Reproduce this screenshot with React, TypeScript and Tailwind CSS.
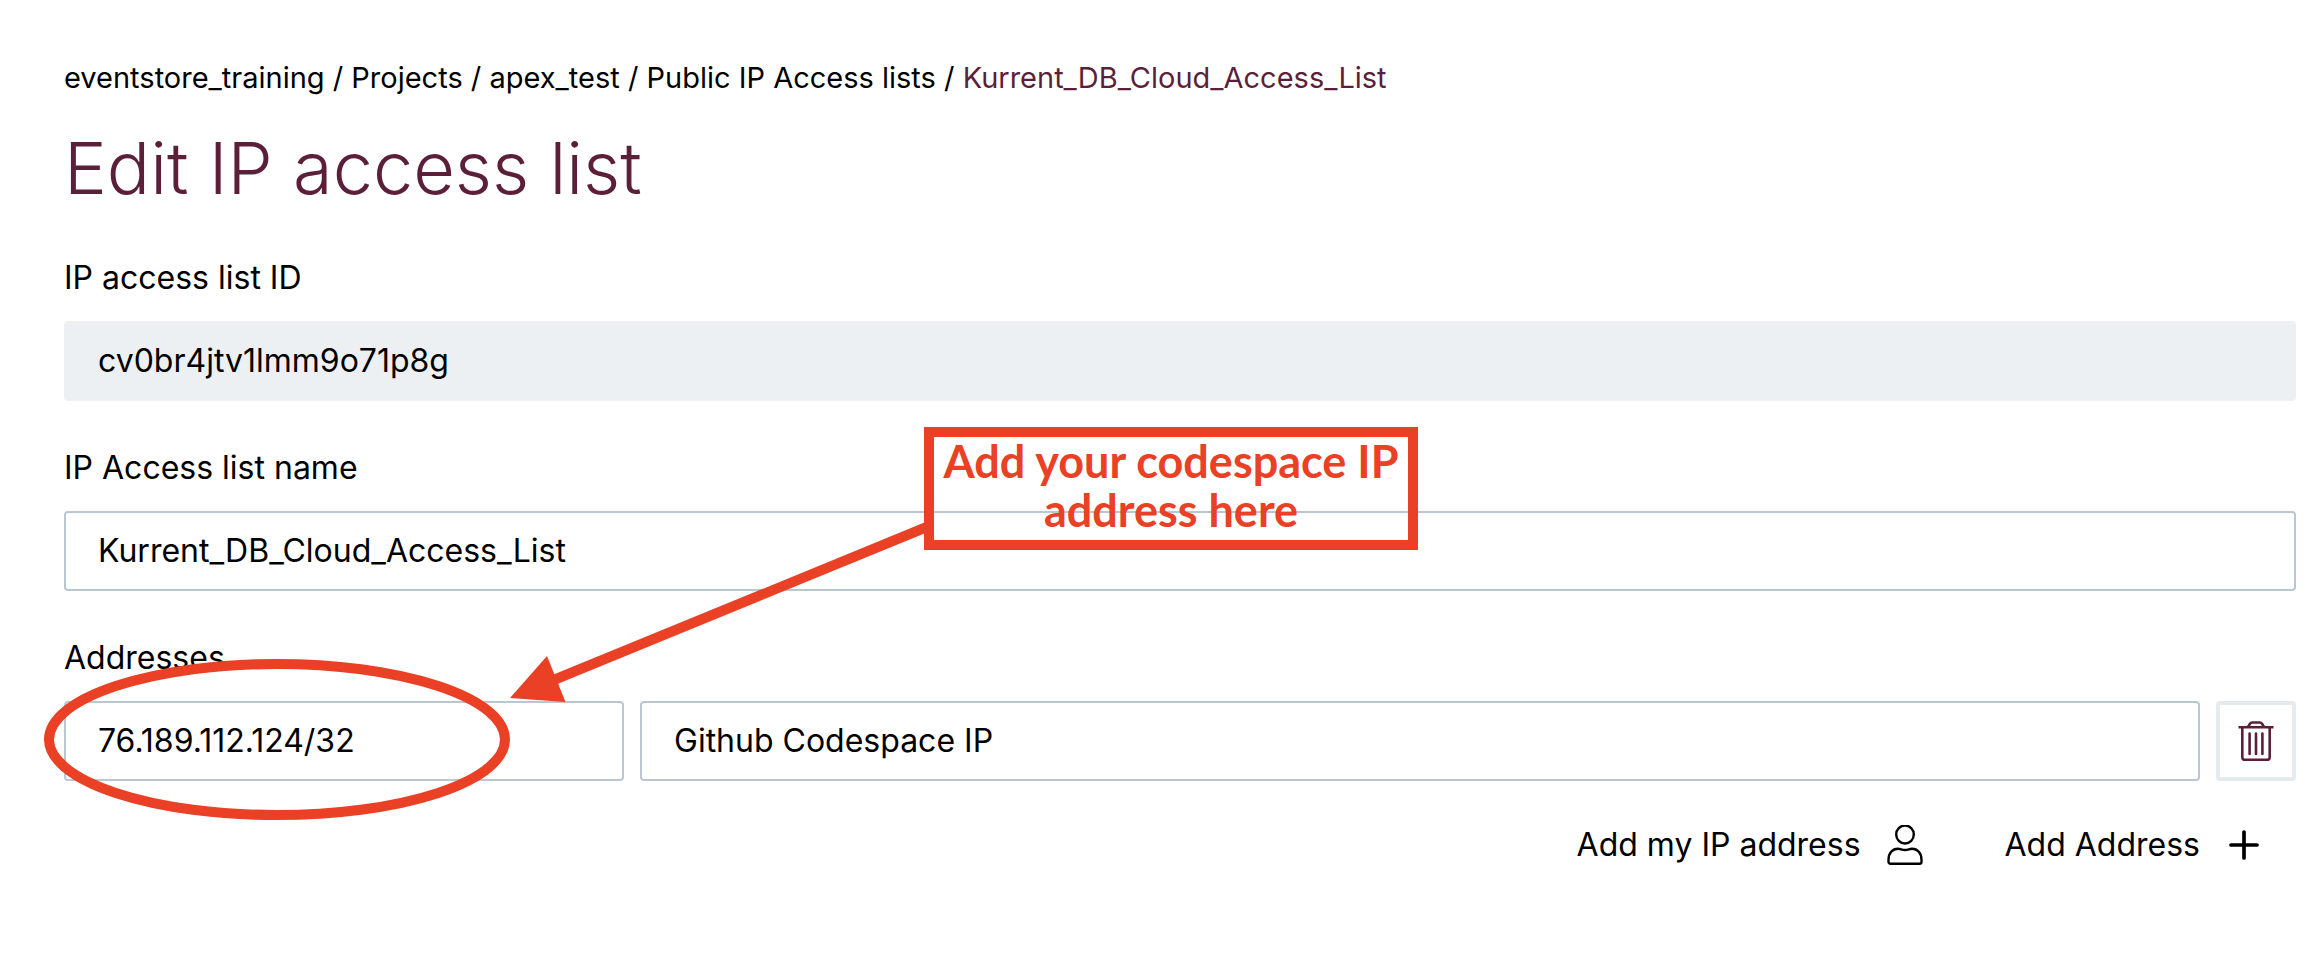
const trail = ["eventstore_training", "Projects", "apex_test", "Public IP Access lists"];

const inputClass =
  "h-20 rounded-[4px] border-2 border-[#b8c7d1] bg-white px-8 pb-[2px] text-[32px] text-black outline-none";
const labelClass = "mb-4 block text-[32px] leading-[54px]";

function TrashIcon() {
  return (
    <svg viewBox="0 0 40 40" className="size-10 shrink-0" fill="none" stroke="#5b1f3a" strokeWidth="2.6" aria-hidden="true">
      <path d="M2.5 6.3h35" />
      <path d="M12 6l1.8-3c.6-1 1.400-1.500 2.500-1.500h7.400c1.100 0 1.900.5 2.500 1.500l1.800 3" />
      <path d="M6.300 6.500v29.700c0 1.600 1.100 2.700 2.700 2.700h22c1.600 0 2.700-1.100 2.700-2.700V6.500" />
      <path d="M13.600 12.500v20.500M20 12.500v20.500M26.400 12.500v20.500" strokeLinecap="round" />
    </svg>
  );
}

function PersonIcon() {
  return (
    <svg viewBox="0 0 40 40" className="size-10 shrink-0" fill="none" stroke="currentColor" strokeWidth="2.4" aria-hidden="true">
      <ellipse cx="20" cy="9.500" rx="8.800" ry="9" />
      <path d="M13 23.700c2.600 0 3.800 1.300 7 1.300s4.400-1.300 7-1.300c5.500 0 9.500 4.300 9.500 11v2c0 1.200-.8 2-2 2H5.500c-1.200 0-2-.8-2-2v-2c0-6.700 4-11 9.500-11z" />
    </svg>
  );
}

function PlusIcon() {
  return (
    <svg viewBox="0 0 40 40" className="size-10 shrink-0" fill="none" stroke="currentColor" strokeWidth="3.700" strokeLinecap="round" aria-hidden="true">
      <path d="M20 7v26M7 20h26" />
    </svg>
  );
}

function Annotation() {
  return (
    <div className="pointer-events-none absolute inset-0">
      <svg className="absolute left-0 top-0 h-[958px] w-[1500px]" fill="none" aria-hidden="true">
        <ellipse cx="277" cy="739.500" rx="228" ry="75.500" stroke="#ea4025" strokeWidth="10" />
        <path d="M928 526.500L550 681.500" stroke="#ea4025" strokeWidth="10" />
        <path d="M510 698l37-42 18.500 46z" fill="#ea4025" />
      </svg>
      <p className="absolute left-[924px] top-[427px] h-[123px] w-[494px] whitespace-nowrap border-10 border-[#ea4025] text-center font-['Lato',sans-serif] text-[45px] font-bold leading-[49px] text-[#ea4025]">
        Add your codespace IP
        <br />
        address here
      </p>
    </div>
  );
}

export default function App() {
  return (
    <div className="relative min-h-screen bg-white pb-16 pl-16 pr-6 pt-[60px] font-['Inter',sans-serif] text-black">
      <nav aria-label="Breadcrumb" className="text-[29px] leading-9">
        {trail.map((item) => (
          <span key={item}>
            <a href="#">{item}</a>
            {" / "}
          </span>
        ))}
        <a href="#" aria-current="page" className="text-[#5b1f3a]">
          Kurrent_DB_Cloud_Access_List
        </a>
      </nav>
      <h1 className="mt-6 text-[72px] font-light leading-[96px] text-[#5b1f3a]">Edit IP access list</h1>

      <form className="mt-[35px] flex flex-col gap-10" onSubmit={(e) => e.preventDefault()}>
        <div>
          <label htmlFor="list-id" className={labelClass}>IP access list ID</label>
          <input
            id="list-id"
            readOnly
            defaultValue="cv0br4jtv1lmm9o71p8g"
            className="block h-20 w-full rounded-[4px] border-2 border-[#ecf0f3] bg-[#ecf0f3] px-8 pb-[2px] text-[32px] text-black outline-none"
          />
        </div>
        <div>
          <label htmlFor="list-name" className={labelClass}>IP Access list name</label>
          <input id="list-name" defaultValue="Kurrent_DB_Cloud_Access_List" className={`block w-full ${inputClass}`} />
        </div>
        <div>
          <label htmlFor="address" className={labelClass}>Addresses</label>
          <div className="flex gap-4">
            <input id="address" defaultValue="76.189.112.124/32" className={`w-[560px] ${inputClass}`} />
            <input aria-label="Description" defaultValue="Github Codespace IP" className={`min-w-0 flex-1 ${inputClass}`} />
            <button
              type="button"
              aria-label="Delete address"
              className="flex size-20 items-center justify-center rounded-[4px] border-4 border-[#e4eaee] bg-white"
            >
              <TrashIcon />
            </button>
          </div>
          <div className="mt-11 flex justify-end gap-20 pr-8 text-[32px] leading-10">
            <button type="button" className="flex items-center gap-6">
              Add my IP address
              <PersonIcon />
            </button>
            <button type="button" className="flex items-center gap-6">
              Add Address
              <PlusIcon />
            </button>
          </div>
        </div>
      </form>
      <Annotation />
    </div>
  );
}
